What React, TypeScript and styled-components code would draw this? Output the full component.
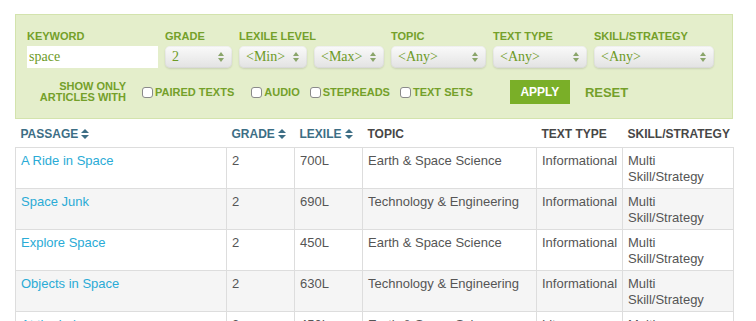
import React from 'react';
import styled, { createGlobalStyle } from 'styled-components';

const GlobalStyle = createGlobalStyle`
  html, body {
    margin: 0;
    padding: 0;
    background: #fff;
  }
  body {
    font-family: "Liberation Sans", Arial, sans-serif;
  }
`

const Page = styled.div`
  padding: 14px 23px 0 15px;
  width: 718px;
`

const FilterPanel = styled.div`
  background: #e4eecb;
  border: 1px solid #d3e3ad;
  padding: 15px 11px 12px;
  height: 76px;
`

const FieldRow = styled.div`
  display: flex;
  gap: 7px;
`

const Field = styled.div<{ $width: number }>`
  width: ${p => p.$width}px;
  display: flex;
  flex-direction: column;
  gap: 3px;
`

const Label = styled.div`
  font-size: 11px;
  line-height: 13px;
  font-weight: bold;
  color: #74a02a;
  white-space: nowrap;
`

const KeywordInput = styled.input`
  box-sizing: border-box;
  width: 100%;
  height: 22px;
  border: none;
  outline: none;
  background: #fff;
  padding: 0 2px;
  font-family: "Liberation Serif", "Times New Roman", serif;
  font-size: 14px;
  color: #6d9a26;
`

const SelectPair = styled.div`
  display: flex;
  gap: 7px;
`

const SelectBox = styled.div<{ $width?: number }>`
  box-sizing: border-box;
  width: ${p => (p.$width ? p.$width + 'px' : '100%')};
  height: 22px;
  border-radius: 5px;
  background: linear-gradient(#fafafa, #ececec 60%, #e2e2e2);
  box-shadow: 0 1px 2px rgba(0, 0, 0, 0.12), inset 0 0 0 1px rgba(0, 0, 0, 0.04);
  display: flex;
  align-items: center;
  justify-content: space-between;
  padding: 0 8px 0 7px;
  font-family: "Liberation Serif", "Times New Roman", serif;
  font-size: 14px;
  color: #6d9a26;
`

const Arrows = () => (
  <svg width="6" height="10" viewBox="0 0 6 10">
    <path d="M3 0 L6 4 L0 4 Z" fill="#8aa56a" />
    <path d="M3 10 L6 6 L0 6 Z" fill="#8aa56a" />
  </svg>
)

const Select = ({ value, width }: { value: string; width?: number }) => (
  <SelectBox $width={width}>
    <span>{value}</span>
    <Arrows />
  </SelectBox>
)

const OptionRow = styled.div`
  display: flex;
  align-items: center;
  margin-top: 12px;
`

const ShowOnly = styled.div`
  width: 99px;
  text-align: right;
  font-size: 11px;
  line-height: 11px;
  font-weight: bold;
  color: #74a02a;
  margin-right: 16px;
`

const CheckItem = styled.label<{ $space: number }>`
  display: flex;
  align-items: center;
  gap: 2px;
  margin-right: ${p => p.$space}px;
  font-size: 11px;
  font-weight: bold;
  color: #74a02a;
`

const Check = styled.span`
  box-sizing: border-box;
  width: 11px;
  height: 11px;
  border: 1px solid #8a8a8a;
  border-radius: 3px;
  background: #fff;
`

const ApplyButton = styled.button`
  width: 60px;
  height: 24px;
  border: none;
  background: #7aaf28;
  color: #fff;
  font-family: "Liberation Sans", Arial, sans-serif;
  font-size: 12px;
  font-weight: bold;
  padding: 0;
  margin-right: 15px;
`

const ResetLink = styled.span`
  font-size: 13px;
  font-weight: bold;
  color: #74a02a;
`

const Table = styled.table`
  width: 718px;
  table-layout: fixed;
  border-collapse: collapse;
  font-size: 13px;
  color: #555;
`

const HeadCell = styled.th<{ $sort?: boolean }>`
  text-align: left;
  font-size: 12px;
  font-weight: bold;
  line-height: 14px;
  padding: 8px 5px 6px;
  color: ${p => (p.$sort ? '#3d6e85' : '#474747')};
  border-bottom: 1px solid #ddd;
  white-space: nowrap;
`

const SortIcon = () => (
  <svg width="8" height="10" viewBox="0 0 8 10" style={{ marginLeft: 3, verticalAlign: -1 }}>
    <path d="M4 0 L8 4 L0 4 Z" fill="#3d6e85" />
    <path d="M4 10 L8 6 L0 6 Z" fill="#3d6e85" />
  </svg>
)

const Row = styled.tr<{ $odd: boolean }>`
  background: ${p => (p.$odd ? '#f5f5f5' : '#fff')};
`

const Cell = styled.td`
  vertical-align: top;
  padding: 5px 5px 3px;
  line-height: 16px;
  border: 1px solid #ddd;
`

const PassageLink = styled.a`
  color: #2aabd6;
  text-decoration: none;
`

const rows = [
  { title: 'A Ride in Space', grade: '2', lexile: '700L', topic: 'Earth & Space Science', type: 'Informational', skill: 'Multi Skill/Strategy' },
  { title: 'Space Junk', grade: '2', lexile: '690L', topic: 'Technology & Engineering', type: 'Informational', skill: 'Multi Skill/Strategy' },
  { title: 'Explore Space', grade: '2', lexile: '450L', topic: 'Earth & Space Science', type: 'Informational', skill: 'Multi Skill/Strategy' },
  { title: 'Objects in Space', grade: '2', lexile: '630L', topic: 'Technology & Engineering', type: 'Informational', skill: 'Multi Skill/Strategy' },
  { title: 'At the Lake', grade: '2', lexile: '450L', topic: 'Earth & Space Science', type: 'Literary', skill: 'Multi Skill/Strategy' },
]

const App = () => {
  return (
    <Page>
      <GlobalStyle />
      <FilterPanel>
        <FieldRow>
          <Field $width={131}>
            <Label>KEYWORD</Label>
            <KeywordInput defaultValue="space" />
          </Field>
          <Field $width={67}>
            <Label>GRADE</Label>
            <Select value="2" />
          </Field>
          <Field $width={145}>
            <Label>LEXILE LEVEL</Label>
            <SelectPair>
              <Select value="<Min>" width={68} />
              <Select value="<Max>" width={70} />
            </SelectPair>
          </Field>
          <Field $width={95}>
            <Label>TOPIC</Label>
            <Select value="<Any>" />
          </Field>
          <Field $width={94}>
            <Label>TEXT TYPE</Label>
            <Select value="<Any>" />
          </Field>
          <Field $width={120}>
            <Label>SKILL/STRATEGY</Label>
            <Select value="<Any>" />
          </Field>
        </FieldRow>
        <OptionRow>
          <ShowOnly>SHOW ONLY<br />ARTICLES WITH</ShowOnly>
          <CheckItem $space={17}><Check />PAIRED TEXTS</CheckItem>
          <CheckItem $space={10}><Check />AUDIO</CheckItem>
          <CheckItem $space={10}><Check />STEPREADS</CheckItem>
          <CheckItem $space={37}><Check />TEXT SETS</CheckItem>
          <ApplyButton>APPLY</ApplyButton>
          <ResetLink>RESET</ResetLink>
        </OptionRow>
      </FilterPanel>
      <Table>
        <colgroup>
          <col style={{ width: 211 }} />
          <col style={{ width: 68 }} />
          <col style={{ width: 68 }} />
          <col style={{ width: 174 }} />
          <col style={{ width: 86 }} />
          <col style={{ width: 111 }} />
        </colgroup>
        <thead>
          <tr>
            <HeadCell $sort>PASSAGE<SortIcon /></HeadCell>
            <HeadCell $sort>GRADE<SortIcon /></HeadCell>
            <HeadCell $sort>LEXILE<SortIcon /></HeadCell>
            <HeadCell>TOPIC</HeadCell>
            <HeadCell>TEXT TYPE</HeadCell>
            <HeadCell>SKILL/STRATEGY</HeadCell>
          </tr>
        </thead>
        <tbody>
          {rows.map((r, i) => (
            <Row key={r.title} $odd={i % 2 === 1}>
              <Cell><PassageLink href="#">{r.title}</PassageLink></Cell>
              <Cell>{r.grade}</Cell>
              <Cell>{r.lexile}</Cell>
              <Cell>{r.topic}</Cell>
              <Cell>{r.type}</Cell>
              <Cell>{r.skill}</Cell>
            </Row>
          ))}
        </tbody>
      </Table>
    </Page>
  )
}

export default App
